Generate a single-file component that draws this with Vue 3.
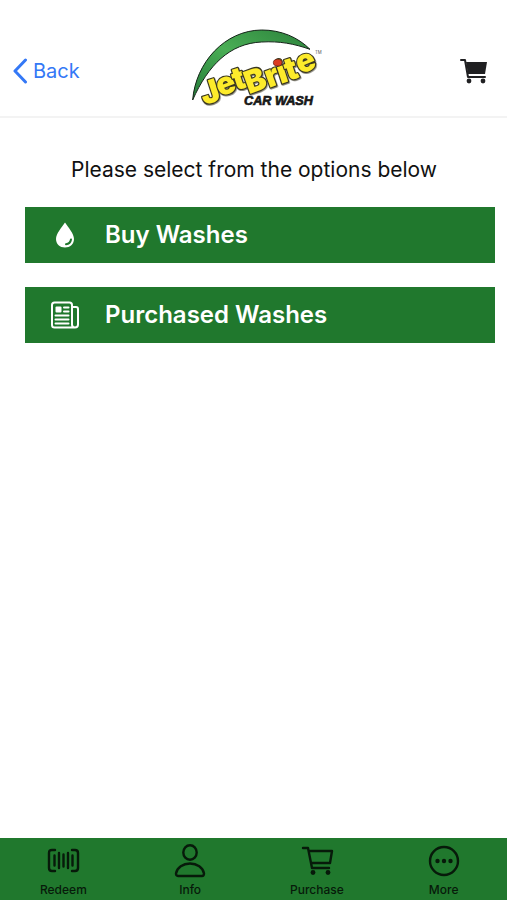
<template>
    <div class="screen">
        <header class="header">
            <button type="button" class="back">
                <svg class="chevron" viewBox="0 0 16 26" aria-hidden="true">
                    <path d="M13.5 2 L3 13 L13.5 24" />
                </svg>
                <span>Back</span>
            </button>
            <svg class="logo" viewBox="-2 0 450 270" role="img" aria-label="JetBrite Car Wash">
                <defs>
                    <linearGradient id="arc" x1="0" y1="1" x2="1" y2="0">
                        <stop offset="0" stop-color="#247a39" />
                        <stop offset="0.5" stop-color="#4aae55" />
                        <stop offset="1" stop-color="#2b803b" />
                    </linearGradient>
                </defs>
                <path class="arc" d="M39 222 C48 110 135 13 246 12 C305 12 355 34 391 70 C343 53 299 45 246 48 C150 52 85 118 39 222 Z" />
                <text class="name" :x="letters.x" :y="letters.y" :rotate="letters.rotate">JetBrite</text>
                <ellipse class="dot" cx="294" cy="110" rx="13" ry="10" />
                <text class="tagline" x="193" y="236">CAR WASH</text>
                <text class="mark" x="406" y="84">TM</text>
            </svg>
            <button type="button" class="cart" aria-label="Cart">
                <svg viewBox="0 0 28 26" aria-hidden="true">
                    <path class="frame" d="M1 2 H5 L8 19 H25" />
                    <path d="M6 4 H27 L25 16 H8 Z" />
                    <circle cx="9" cy="23" r="2.4" />
                    <circle cx="23" cy="23" r="2.4" />
                </svg>
            </button>
        </header>

        <main class="content">
            <h1>Please select from the options below</h1>
            <button v-for="option in options" :key="option.id" type="button" class="option">
                <svg v-if="option.id === 'buy'" viewBox="0 0 28 28" aria-hidden="true">
                    <path class="solid" d="M14 1.5 C11 6 5 12.5 5 18 C5 23.2 9 26.5 14 26.5 C19 26.5 23 23.2 23 18 C23 12.5 17 6 14 1.5 Z" />
                    <path class="glint" d="M20 18.5 C19.5 21.5 17.5 23 15 23.2" />
                </svg>
                <svg v-else viewBox="0 0 28 28" aria-hidden="true">
                    <path d="M21 24 V4 Q21 1.5 18.5 1.5 H3.5 Q1 1.5 1 4 V24 Q1 26.5 3.5 26.5 H24 Q27 26.5 27 23.5 V8 Q27 6 25 6 H21 M21 23.5 Q21 26.5 24 26.5" />
                    <path d="M13 6.5 H17.5 M13 10.5 H17.5 M4.5 14.5 H17.5 M4.5 18.5 H17.5 M4.5 22.5 H17.5" />
                    <rect class="solid" x="4.5" y="5.5" width="6" height="6" rx="1" />
                </svg>
                <span>{{ option.label }}</span>
            </button>
        </main>

        <nav class="tabs">
            <a v-for="tab in tabs" :key="tab" href="#" @click.prevent>
                <svg v-if="tab === 'Redeem'" viewBox="0 0 32 32" aria-hidden="true">
                    <path d="M8 5 H5 Q2 5 2 8 V23 Q2 26 5 26 H8 M25 5 H28 Q31 5 31 8 V23 Q31 26 28 26 H25" />
                    <path d="M7.5 10.5 V20.5 M12 8 V23 M16.5 9.5 V21.5 M21 8 V23 M25.5 10.5 V20.5" />
                </svg>
                <svg v-else-if="tab === 'Info'" viewBox="0 0 32 32" aria-hidden="true">
                    <ellipse cx="16" cy="7.5" rx="6.7" ry="7.2" />
                    <path d="M4 31 Q2 31 2 28.5 C3 22.5 9 18.5 16 18.5 C23 18.5 29 22.5 30 28.5 Q30 31 28 31 Z" />
                </svg>
                <svg v-else-if="tab === 'Purchase'" viewBox="0 0 32 32" aria-hidden="true">
                    <path d="M2 3 H7 L11 23 H28 M8 6 H31 L29 18 H10" />
                    <circle class="dot" cx="12" cy="27.5" r="2.4" />
                    <circle class="dot" cx="27" cy="27.5" r="2.4" />
                </svg>
                <svg v-else viewBox="0 0 32 32" aria-hidden="true">
                    <circle cx="16" cy="16" r="14" />
                    <circle class="dot" cx="9.5" cy="16" r="2.2" />
                    <circle class="dot" cx="16" cy="16" r="2.2" />
                    <circle class="dot" cx="22.5" cy="16" r="2.2" />
                </svg>
                <span>{{ tab }}</span>
            </a>
        </nav>
    </div>
</template>

<script setup>
const options = [
    { id: 'buy', label: 'Buy Washes' },
    { id: 'purchased', label: 'Purchased Washes' },
];

const tabs = ['Redeem', 'Info', 'Purchase', 'More'];

// Each letter of the logo climbs along the arc
const letters = {
    x: '74 121 169 208 268 303 326 362',
    y: '238 212 194 205 186 174 165 145',
    rotate: '-18 -20 -18 -20 -20 -18 -18 -22',
};
</script>

<style>
body {
    margin: 0;
    background-color: #ffffff;
}
</style>

<style scoped>
.screen {
    display: flex;
    flex-direction: column;
    min-height: 100vh;
    font-family: Inter, "Liberation Sans", sans-serif;
    color: #111111;
}

button {
    border: 0;
    padding: 0;
    background: none;
    font-family: inherit;
    cursor: pointer;
}

.header {
    display: grid;
    grid-template-columns: 1fr auto 1fr;
    align-items: center;
    padding: 26px 12px 0;
    border-bottom: 2px solid #f3f3f3;
}

.back {
    display: flex;
    align-items: center;
    gap: 5px;
    font-size: 20px;
    line-height: 26px;
    color: #3478f6;
}

.chevron {
    width: 16px;
    height: 26px;
    fill: none;
    stroke: #3478f6;
    stroke-width: 3;
    stroke-linecap: round;
    stroke-linejoin: round;
}

.logo {
    width: 150px;
    height: 90px;
}

.arc {
    fill: url(#arc);
    stroke: #142318;
    stroke-width: 3;
    stroke-linejoin: round;
}

.name {
    fill: #fdeb2b;
    stroke: #3a3720;
    stroke-width: 7;
    paint-order: stroke;
    stroke-linejoin: round;
    font-size: 94px;
    font-weight: 900;
    filter: drop-shadow(2px 3px 1px #8c8a80);
}

.logo .dot {
    fill: #db3b22;
    stroke: #541b12;
    stroke-width: 2;
}

.tagline {
    fill: #171717;
    font-family: "Liberation Sans", sans-serif;
    font-size: 38px;
    font-weight: 700;
    font-style: italic;
    stroke: #171717;
    stroke-width: 2;
}

.mark {
    fill: #555555;
    font-size: 13px;
}

.cart {
    justify-self: end;
    padding-right: 7px;
}

.cart svg {
    display: block;
    width: 28px;
    height: 26px;
    fill: #202022;
}

.cart .frame {
    fill: none;
    stroke: #202022;
    stroke-width: 2;
    stroke-linecap: round;
    stroke-linejoin: round;
}

.content {
    flex: 1;
    display: flex;
    flex-direction: column;
    gap: 24px;
    padding: 39px 12px 24px 25px;
}

h1 {
    margin: 0 0 0 -12px;
    font-size: 21px;
    font-weight: 400;
    line-height: 26px;
    text-align: center;
}

.option {
    display: flex;
    align-items: center;
    gap: 26px;
    padding: 14px 26px;
    background-color: #20782d;
    color: #ffffff;
    font-size: 24px;
    font-weight: 600;
    line-height: 28px;
    text-align: left;
}

.option svg {
    flex: none;
    width: 28px;
    height: 28px;
    fill: none;
    stroke: #ffffff;
    stroke-width: 2;
    stroke-linecap: round;
    stroke-linejoin: round;
}

.option .solid {
    fill: #ffffff;
    stroke: none;
}

.option .glint {
    stroke: #20782d;
}

.tabs {
    display: grid;
    grid-template-columns: repeat(4, 1fr);
    background-color: #20782d;
}

.tabs a {
    display: flex;
    flex-direction: column;
    align-items: center;
    gap: 4px;
    padding: 7px 0 1px;
    color: #071a0a;
    font-size: 12px;
    font-weight: 500;
    line-height: 18px;
    text-decoration: none;
}

.tabs svg {
    width: 32px;
    height: 32px;
    overflow: visible;
    fill: none;
    stroke: #071a0a;
    stroke-width: 2.4;
    stroke-linecap: round;
    stroke-linejoin: round;
}

.tabs .dot {
    fill: #071a0a;
    stroke: none;
}
</style>
